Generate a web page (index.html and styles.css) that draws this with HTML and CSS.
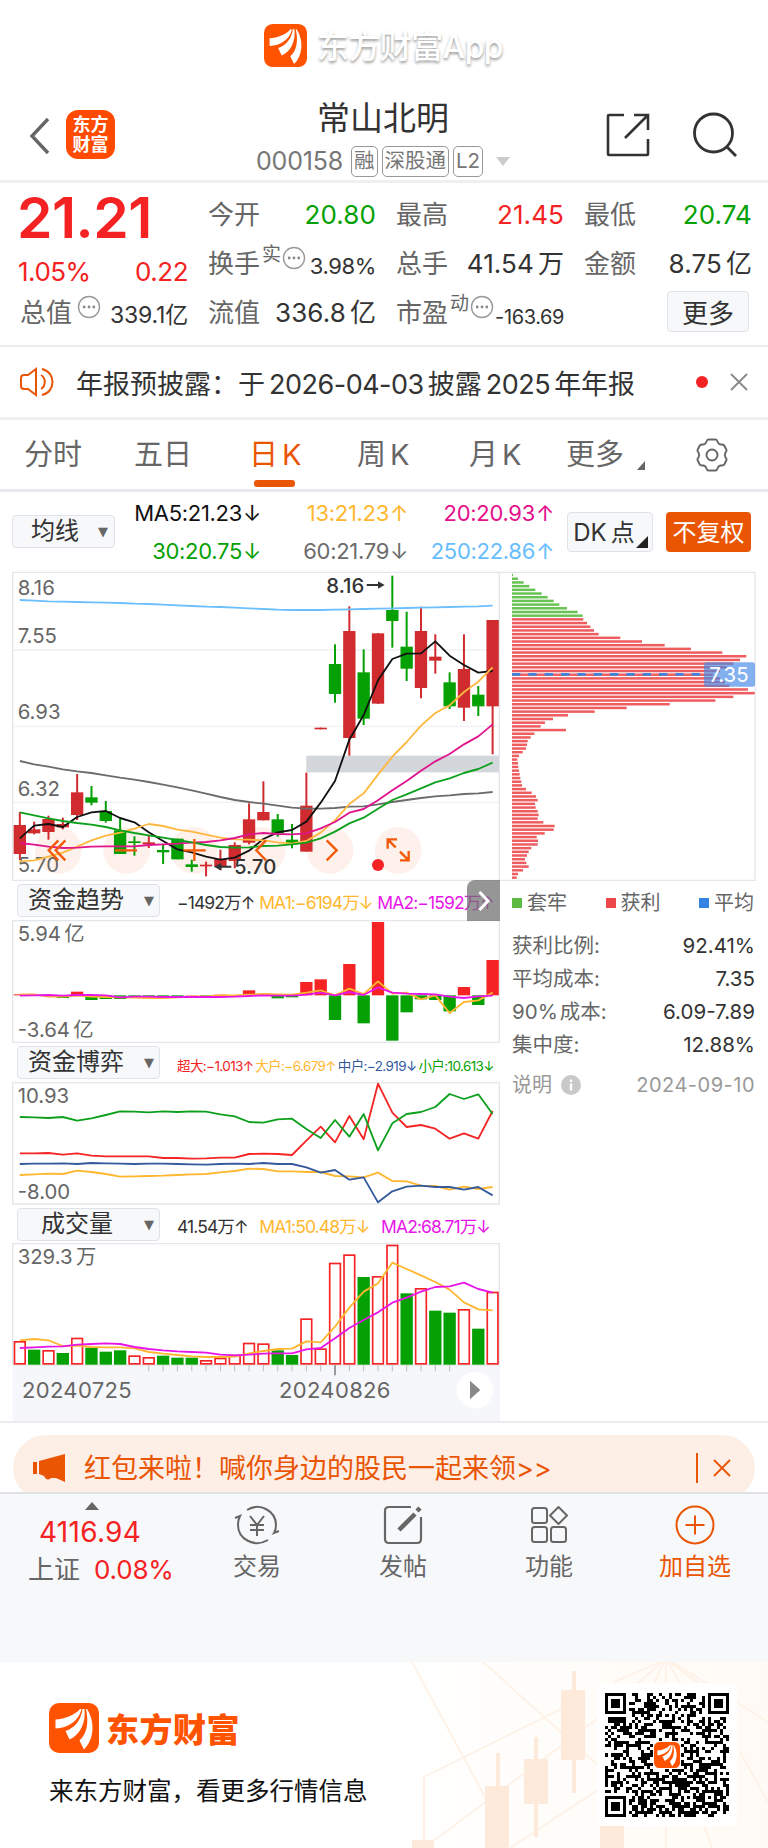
FILE: index.html
```html
<!DOCTYPE html>
<html lang="zh-CN">
<head>
    <meta charset="UTF-8">
    <meta name="viewport" content="width=device-width, initial-scale=1.0">
    <title>常山北明 000158</title>
    <link rel="stylesheet" href="styles.css">
</head>
<body>

<svg width="0" height="0" class="defs">
    <symbol id="logo" viewBox="0 0 100 100">
        <rect width="100" height="100" rx="20" fill="#ff5300"/>
        <path fill="#fff" d="M62 12C52 24 32 32 13 33V51C38 50 60 36 65 12ZM67 12C64 36 50 50 33 56L41 73C62 64 74 40 71 12ZM74 12C80 40 76 62 61 75L70 93C90 74 93 38 76 12Z"/>
    </symbol>
    <symbol id="dots" viewBox="0 0 24 24">
        <circle cx="12" cy="12" r="10.5" fill="none" stroke="#999" stroke-width="1.4"/>
        <circle cx="7.2" cy="12" r="1.4" fill="#888"/><circle cx="12" cy="12" r="1.4" fill="#888"/><circle cx="16.8" cy="12" r="1.4" fill="#888"/>
    </symbol>
</svg>

<div class="brand">
    <svg width="43" height="43"><use href="#logo"/></svg>
    <span>东方财富App</span>
</div>

<header class="header">
    <svg class="back" width="24" height="38" viewBox="0 0 24 38"><path d="M20 2 4 19 20 36" fill="none" stroke="#666" stroke-width="3.4"/></svg>
    <div class="badge">东方<br>财富</div>
    <div class="title">
        <h1>常山北明</h1>
        <div class="code">
            <span class="num">000158</span><i>融</i><i>深股通</i><i>L2</i>
            <svg width="14" height="9" viewBox="0 0 14 9"><path d="M0 0h14L7 9z" fill="#ccc"/></svg>
        </div>
    </div>
    <svg class="share" width="46" height="46" viewBox="0 0 46 46" fill="none" stroke="#333" stroke-width="2.6"><path d="M19 3H4q-1 0-1 1V42q0 1 1 1H42q1 0 1-1V27M29 3H43V18M43 3 20 26"/></svg>
    <svg class="search" width="46" height="46" viewBox="0 0 46 46" fill="none" stroke="#333" stroke-width="2.8"><circle cx="21.500" cy="21" r="19"/><path d="M35 35 44 44"/></svg>
</header>

<section class="quote">
    <div class="col">
        <div class="price">21.21</div>
        <div class="cell red change"><span>1.05%</span><span>0.22</span></div>
        <div class="cell"><label>总值</label><svg class="tip tip-gap" width="24" height="24"><use href="#dots"/></svg><b class="mid">339.1亿</b></div>
    </div>
    <div class="col">
        <div class="cell"><label>今开</label><b class="green">20.80</b></div>
        <div class="cell"><label>换手</label><sup>实</sup><svg class="tip" width="24" height="24"><use href="#dots"/></svg><b class="small">3.98%</b></div>
        <div class="cell"><label>流值</label><b>336.8<s></s>亿</b></div>
    </div>
    <div class="col">
        <div class="cell"><label>最高</label><b class="red">21.45</b></div>
        <div class="cell"><label>总手</label><b>41.54<s></s>万</b></div>
        <div class="cell"><label>市盈</label><sup>动</sup><svg class="tip" width="24" height="24"><use href="#dots"/></svg><b class="tiny">-163.69</b></div>
    </div>
    <div class="col">
        <div class="cell"><label>最低</label><b class="green">20.74</b></div>
        <div class="cell"><label>金额</label><b>8.75<s></s>亿</b></div>
        <div class="cell more"><button>更多</button></div>
    </div>
</section>

<section class="notice">
    <svg width="36" height="30" viewBox="0 0 36 30" fill="none" stroke="#ea5504" stroke-width="2"><path d="M16 2V28L8 22H4q-3 0-3-3V11q0-3 3-3H8ZM21 8c5 3 5 11 0 14M22 2c14 3 14 23 0 26"/></svg>
    <p>年报预披露：于<s></s><span>2026-04-03</span><s></s>披露<s></s><span>2025</span><s></s>年年报</p>
    <span class="dot"></span>
    <svg width="18" height="18" viewBox="0 0 18 18"><path d="M1 1 17 17M17 1 1 17" stroke="#888" stroke-width="1.8"/></svg>
</section>

<nav class="tabs">
    <span>分时</span>
    <span>五日</span>
    <span class="active">日<s></s>K</span>
    <span>周<s></s>K</span>
    <span>月<s></s>K</span>
    <span>更多<svg class="corner" width="8" height="9" viewBox="0 0 8 9"><path d="M8 0V9H0z" fill="#666"/></svg></span>
    <svg width="34" height="34" viewBox="0 0 34 34" fill="none" stroke="#666" stroke-width="1.9" stroke-linejoin="round"><path d="M13.500 1.500h7q1.500 0 2 2 1 3 3.500 3 3-.5 4 2.500l1.500 3q.5 1-1 2.500-1.500 2.500 0 5 1.500 1.500 1 2.500l-1.500 3q-1 3-4 2.500-2.500 0-3.500 3-.5 2-2 2h-7q-1.500 0-2-2-1-3-3.500-3-3 .5-4-2.500l-1.500-3q-.5-1 1-2.500 1.500-2.500 0-5-1.500-1.500-1-2.500l1.500-3q1-3 4-2.500 2.500 0 3.500-3 .5-2 2-2z"/><circle cx="17" cy="17" r="5.500"/></svg>
</nav>

<section class="toolbar">
    <button class="select">均线<em>▼</em></button>
    <div class="ma">
        <span class="c-black">MA5:21.23<u>↓</u></span><span class="c-yellow">13:21.23<u>↑</u></span><span class="c-pink">20:20.93<u>↑</u></span>
        <span class="c-green">30:20.75<u>↓</u></span><span class="c-gray">60:21.79<u>↓</u></span><span class="c-blue">250:22.86<u>↑</u></span>
    </div>
    <button class="dk">DK<s></s>点<svg width="12" height="12" viewBox="0 0 12 12"><path d="M12 0V12H0z" fill="#222"/></svg></button>
    <button class="adjust">不复权</button>
</section>

<section class="charts">
    <div class="left">
        <svg id="kline" width="488" height="310" viewBox="36 18 1464 930"></svg>

        <div class="panel-head">
            <button>资金趋势<em>▼</em></button>
            <div class="legend trend"><span class="c-dark">−1492万↑</span><span class="c-yellow">MA1:−6194万↓</span><span class="c-purple">MA2:−1592万↑</span></div>
            <div class="expand"><svg width="12" height="22" viewBox="0 0 12 22"><path d="M1.500 2 10 11 1.500 20" fill="none" stroke="#fff" stroke-width="3"/></svg></div>
        </div>
        <svg id="trend" width="488" height="123" viewBox="36 120 1464 369"></svg>

        <div class="panel-head">
            <button>资金博弈<em>▼</em></button>
            <div class="legend game"><span class="c-red">超大:−1.013↑</span><span class="c-yellow">大户:−6.679↑</span><span class="c-navy">中户:−2.919↓</span><span class="c-green">小户:10.613↓</span></div>
        </div>
        <svg id="game" width="488" height="123" viewBox="36 126 1464 369"></svg>

        <div class="panel-head last">
            <button>成交量<em>▼</em></button>
            <div class="legend vol"><span class="c-dark">41.54万↑</span><span class="c-yellow">MA1:50.48万↓</span><span class="c-purple">MA2:68.71万↓</span></div>
        </div>
        <svg id="volume" width="488" height="178" viewBox="36 99 1464 534"></svg>
    </div>

    <div class="right">
        <svg id="chips" width="256" height="310" viewBox="1500 18 768 930"></svg>
        <div class="keys">
            <span><i class="k-green"></i>套牢</span><span><i class="k-red"></i>获利</span><span><i class="k-blue"></i>平均</span>
        </div>
        <dl>
            <div><dt>获利比例:</dt><dd>92.41%</dd></div>
            <div><dt>平均成本:</dt><dd>7.35</dd></div>
            <div><dt>90%<s></s>成本:</dt><dd>6.09-7.89</dd></div>
            <div><dt>集中度:</dt><dd>12.88%</dd></div>
        </dl>
        <div class="note"><span>说明</span><svg width="20" height="20" viewBox="0 0 20 20"><circle cx="10" cy="10" r="10" fill="#c8c8c8"/><path d="M10 8.500V15.500M10 4.500V7" stroke="#fff" stroke-width="2.400"/></svg><span class="date">2024-09-10</span></div>
    </div>
</section>

<section class="promo">
    <div class="pill">
        <svg width="32" height="28" viewBox="0 0 32 28" fill="#ea5504"><path d="M0 8H4V20H0zM6 7 32 0V28L23 24H18Q14 28 11 22L6 20z"/></svg>
        <span>红包来啦！喊你身边的股民一起来领&gt;&gt;</span>
        <svg class="close" width="18" height="18" viewBox="0 0 18 18"><path d="M1 1 17 17M17 1 1 17" stroke="#ea5504" stroke-width="1.800"/></svg>
    </div>
</section>

<footer class="bar">
    <div class="index">
        <svg width="14" height="8" viewBox="0 0 14 8"><path d="M7 0 14 8H0z" fill="#666"/></svg>
        <strong>4116.94</strong>
        <p>上证<span>0.08%</span></p>
    </div>
    <div class="item">
        <svg width="46" height="40" viewBox="0 0 46 40" fill="none" stroke="#666" stroke-width="2"><path d="M13 5C26-3 42 6 42 20q0 5-2 8l5-2M34 35C20 43 4 34 4 20q0-5 2-9L1 13M16 11 23 20 30 11M23 20V31M16 20H30M16 25H30"/></svg>
        <span>交易</span>
    </div>
    <div class="item">
        <svg width="40" height="40" viewBox="0 0 40 40" fill="none" stroke="#666" stroke-width="2.200"><path d="M28 2H6Q2 2 2 6V34Q2 38 6 38H34Q38 38 38 34V12"/><path d="M16 25 32 9M34 6 37 3" stroke-width="4.500"/></svg>
        <span>发帖</span>
    </div>
    <div class="item">
        <svg width="38" height="38" viewBox="0 0 38 38" fill="none" stroke="#666" stroke-width="2"><rect x="2" y="2" width="15" height="15" rx="2.500"/><rect x="2" y="21" width="15" height="15" rx="2.500"/><rect x="21" y="21" width="15" height="15" rx="2.500"/><path d="M28.500 1 37 9.500 28.500 18 20 9.500z" stroke-linejoin="round"/></svg>
        <span>功能</span>
    </div>
    <div class="item add">
        <svg width="40" height="40" viewBox="0 0 40 40" fill="none" stroke="#ea5504" stroke-width="2"><circle cx="20" cy="20" r="18.500"/><path d="M20 10.500V29.500M10.500 20H29.500"/></svg>
        <span>加自选</span>
    </div>
</footer>

<section class="download">
    <svg class="deco" width="368" height="186" viewBox="400 0 368 186">
        <defs><linearGradient id="fade"><stop offset="0" stop-color="#fff"/><stop offset="0.400" stop-color="#fffdfa"/><stop offset="1" stop-color="#fffaf5"/></linearGradient></defs>
        <rect x="400" width="368" height="186" fill="url(#fade)"/>
        <g stroke="#fef1e6" stroke-width="1.800" fill="none">
            <path d="M412 0 485 135 500 186M483 0 600 105M424 115 565 45M424 186 600 55M510 186 610 120M660 0 614 20M662 0 630 28M664 0 650 30M666 0V30M668 0 685 30M670 0 705 26M672 0 768 60M740 90 768 140M666 164V186M704 164 712 186M424 115V186"/>
        </g>
        <g fill="#feeadb">
            <path d="M561 28h24v70h-24zM572 9h4v122h-4zM524 97h24v45h-24zM534 75h4v100h-4zM485 124h24v62h-24zM496 91h4v34h-4zM600 164h24v22h-24zM412 178h22v8h-22z"/>
        </g>
    </svg>
    <div class="about">
        <div class="name"><svg width="50" height="50"><use href="#logo"/></svg><strong>东方财富</strong></div>
        <p>来东方财富，看更多行情信息</p>
    </div>
    <div class="qr">
        <svg id="qr" width="124" height="124" viewBox="0 0 41 41" shape-rendering="crispEdges"></svg>
        <svg class="qr-logo" width="26" height="26"><use href="#logo"/></svg>
    </div>
</section>

<script>
    const RED = '#d02b2e', GREEN = '#04a004';
    const YELLOW = '#ffb72f', PURPLE = '#e815e8';

    // three chart units are one pixel, bars are 43 units apart
    const cx = i => 59.5 + i * 42.98;
    const rect = (x, y, w, h, fill, extra = '') => `<rect x="${x}" y="${y}" width="${w}" height="${h}" fill="${fill}" ${extra}/>`;
    const line = (x1, y1, x2, y2, stroke, w) => `<path d="M${x1} ${y1}L${x2} ${y2}" stroke="${stroke}" stroke-width="${w}"/>`;
    const curve = (ys, stroke) => `<polyline points="${ys.map((y, i) => cx(i) + ',' + y).join(' ')}" fill="none" stroke="${stroke}" stroke-width="5.5" stroke-linejoin="round"/>`;
    const label = (x, y, text, cls = '') => `<text x="${x}" y="${y}" class="axis ${cls}">${text}</text>`;
    const frame = (top, bottom) => `<path d="M38 ${top}H1498V${bottom}H38Z" fill="none" stroke="#e4e6ec" stroke-width="4"/>`;
    const draw = (id, parts) => { document.getElementById(id).innerHTML = parts.join(''); };

    // body top, body bottom, high, low, up
    const candles = [
        [780,867,741,885,1],[793,805,770,808,1],[762,801,752,824,1],[777,787,758,793,1],[682,750,627,765,1],
        [697,713,663,721,0],[738,768,708,773,0],[796,867,760,867,0],[829,834,814,872,0],[832,838,813,849,1],
        [855,862,840,897,0],[821,883,821,883,0],[898,906,884,920,0],[899,904,890,934,1],[882,905,854,915,1],
        [840,888,832,910,1],[763,833,715,838,1],[741,766,649,766,1],[763,805,747,815,0],[824,838,777,850,0],
        [722,860,623,860,1],[488,493,488,493,1],[297,387,238,413,0],[198,519,124,572,1],[322,461,253,480,0],
        [205,416,205,416,1],[135,168,32,248,0],[245,311,140,348,0],[198,369,125,400,1],[275,287,208,326,1],
        [352,424,322,432,0],[312,428,208,468,1],[389,424,363,453,0],[165,424,165,568,1]
    ];
    const ma5 = [820,782,777,786,756,742,738,759,772,802,828,853,862,875,884,878,857,822,802,795,770,713,648,524,450,346,282,266,265,229,272,300,323,318];
    const ma13 = [889,886,875,863,845,826,812,803,791,777,783,794,800,809,818,823,824,826,832,836,828,803,766,717,685,629,575,531,482,444,421,381,350,307];
    const ma20 = [834,839,845,849,848,845,844,844,844,840,838,836,833,831,826,819,808,804,807,808,805,790,771,743,732,706,676,648,617,589,567,538,514,478];
    const ma30 = [742,751,760,768,774,779,786,796,804,811,818,825,832,840,846,848,847,843,842,838,833,820,800,775,758,731,705,688,670,652,640,624,612,593];
    const ma60 = [588,598,605,613,619,624,631,638,644,651,659,667,676,686,696,705,711,716,722,728,731,731,729,725,724,718,711,705,699,694,691,687,685,681];
    const ma250 = [105,107,109,110,111,112,113,114,116,117,119,121,123,125,126,128,130,132,134,135,135,135,134,133,132,131,130,129,128,127,126,125,124,122];

    draw('kline', [
        frame(22, 946),
        ...[255, 484, 712].map(y => line(38, y, 1498, y, '#eef0f4', 4)),
        ...[175, 380, 582, 787, 990, 1195].map(x => `<circle cx="${x}" cy="856" r="70" fill="#fef0ea"/>`),
        rect(919, 572, 578, 50, '#d3d6db'),
        ...candles.map((c, i) => {
            const color = c[4] ? RED : GREEN;
            return line(cx(i), c[2], cx(i), c[3], color, 6) + rect(cx(i) - 18.5, c[0], 37, c[1] - c[0], color);
        }),
        label(53, 90, '8.16'), label(53, 235, '7.55'), label(53, 463, '6.93'), label(53, 693, '6.32'), label(53, 922, '5.70'),
        curve(ma250, '#6bbfff'), curve(ma60, '#6b6b6b'), curve(ma5, '#111'), curve(ma13, '#ffb940'), curve(ma20, '#e0148c'), curve(ma30, '#0da01c'),
        label(979, 83, '8.16', 'mark'), label(702, 927, '5.70', 'mark'),
        '<path d="M1100 60H1140M694 905H660" stroke="#333" stroke-width="6"/><path d="M1154 60 1134 49V71zM642 905 664 893V917z" fill="#333"/>',
        '<g fill="none" stroke="#f25a0a" stroke-width="7"><path d="M175 826 146 856 175 886M196 826 167 856 196 886M345 856H411M550 856H617M583 822V888M798 826 769 856 798 886M980 826 1010 856 980 886M1191 823H1163V851M1163 823 1187 847M1200 886H1226V858M1226 886 1200 860"/></g>',
        '<circle cx="1134" cy="900" r="18" fill="#f42222"/>'
    ]);

    const flow = [343,346,346,354,335,360,357,357,348,348,348,348,345,348,344,348,331,346,355,352,306,298,420,252,430,126,482,397,358,360,394,321,375,240];
    const flowMa1 = [343,343,350,350,347,350,351,352,353,354,354,352,349,349,346,346,344,342,343,344,338,331,346,326,342,304,341,338,358,346,399,366,361,338];
    const flowMa2 = [347,346,345,347,345,345,346,352,350,350,351,351,351,351,351,350,348,346,347,347,344,338,346,336,345,322,338,341,342,343,350,354,349,347];
    draw('trend', [
        frame(122, 487),
        ...flow.map((y, i) => rect(cx(i) - 18.5, Math.min(y, 346), 37, Math.abs(y - 346), y < 346 ? '#f52323' : GREEN)),
        label(53, 183, '5.94<tspan dx="10">亿</tspan>'), label(53, 472, '-3.64<tspan dx="10">亿</tspan>'),
        curve(flowMa1, YELLOW), curve(flowMa2, PURPLE)
    ]);

    draw('game', [
        frame(128, 492),
        label(53, 188, '10.93'), label(53, 477, '-8.00'),
        curve([405,403,401,402,392,396,402,410,409,408,407,405,403,402,397,393,386,387,394,394,396,396,408,409,412,398,423,424,437,438,449,440,447,441], YELLOW),
        curve([372,371,371,370,372,369,370,371,372,371,371,372,373,374,372,371,372,369,372,372,382,398,390,419,412,487,454,440,437,441,441,449,441,466], '#34599c'),
        curve([340,340,339,344,340,347,349,349,349,349,354,354,356,355,353,353,342,341,342,345,302,260,307,228,298,131,218,261,255,266,296,280,296,213], '#f52525'),
        curve([231,232,234,231,242,235,225,214,215,217,214,216,214,215,223,229,246,248,238,236,267,294,240,290,222,331,250,222,216,201,162,177,163,222], '#0da01c')
    ]);

    const volumes = [393,419,420,429,383,413,425,421,436,441,437,443,443,450,443,434,398,400,421,435,325,415,158,133,201,198,104,250,234,302,308,297,356,245];
    const falling = [1,3,5,6,7,10,11,12,18,19,24,27,29,30,32];
    const ticks = [];
    for (let i = 9; i <= 30; i++) ticks.push(line(cx(i), 466, cx(i), i === 22 ? 496 : 484, i === 22 ? '#888' : '#bbb', i === 22 ? 5 : 3));
    draw('volume', [
        rect(38, 466, 1462, 167, '#f6f7fa'),
        frame(101, 465),
        label(53, 163, '329.3<tspan dx="10">万</tspan>'),
        ...volumes.map((y, i) => falling.includes(i)
            ? rect(cx(i) - 18.5, y, 37, 464 - y, GREEN)
            : rect(cx(i) - 16, y + 2.5, 32, 459 - y, '#fff', 'stroke="#f52323" stroke-width="5"')),
        curve([391,387,391,408,407,411,412,412,415,426,431,435,439,441,441,440,430,423,417,416,394,397,350,293,245,220,158,177,196,216,239,277,298,301], YELLOW),
        curve([414,412,410,409,404,402,400,402,411,417,421,424,426,428,434,436,434,431,430,430,418,414,385,354,330,307,278,263,245,231,229,218,237,248], PURPLE),
        ...ticks,
        label(66, 563, '20240725', 'day'), label(837, 563, '20240826', 'day'),
        '<circle cx="1425" cy="540" r="55" fill="#fff"/><path d="M1410 512 1441 540 1410 568z" fill="#888"/>'
    ]);

    const chips = [39,54,71,88,106,125,143,161,178,201,233,248,250,261,271,282,296,361,426,494,573,667,739,720,700,680,660,640,660,675,688,744,764,700,646,509,380,284,204,159,135,122,198,103,92,83,81,78,68,57,52,54,55,57,59,61,64,66,78,95,108,113,105,107,113,116,113,130,164,161,134,110,114,113,94,86,81,75,79,86,69,54,50];
    draw('chips', [
        '<path d="M1500 22H2265V946H1500" fill="none" stroke="#e4e6ec" stroke-width="4"/>',
        ...chips.map((x, i) => rect(1536, 26.5 + i * 11.07, x - 36, 7.5, i < 12 ? '#69c354' : '#ef5c5f')),
        '<path d="M1536 328H2110" stroke="#3f83dd" stroke-width="8" stroke-dasharray="25 24"/>',
        rect(2112, 292, 153, 73, '#4388e6', 'rx="8" fill-opacity="0.66"'),
        label(2128, 350, '7.35', 'tag')
    ]);

    // 41 x 41 code with three finder squares and a clear centre
    const finder = (x, y) => {
        const dx = Math.abs(x - 3), dy = Math.abs(y - 3), d = Math.max(dx, dy);
        return d === 3 || d < 2;
    };
    let seed = 158, cells = '';
    for (let y = 0; y < 41; y++) {
        for (let x = 0; x < 41; x++) {
            seed = (seed * 1103515245 + 12345) % 2147483648;
            let on = (seed >> 12) % 100 < 50;
            if (x < 8 && y < 8) on = x < 7 && y < 7 && finder(x, y);
            else if (x > 32 && y < 8) on = x > 33 && y < 7 && finder(x - 34, y);
            else if (x < 8 && y > 32) on = x < 7 && y > 33 && finder(x, y - 34);
            else if (Math.max(Math.abs(x - 34), Math.abs(y - 34)) < 3) on = Math.max(Math.abs(x - 34), Math.abs(y - 34)) !== 1;
            if (Math.abs(x - 20) < 5 && Math.abs(y - 20) < 5) on = false;
            if (on) cells += `M${x} ${y}h1v1h-1z`;
        }
    }
    draw('qr', [`<path d="${cells}"/>`]);
</script>

</body>
</html>
```
FILE: styles.css
```css
* {
    box-sizing: border-box;
}
body {
    width: 768px;
    margin: 0;
    background: #fff;
    color: #333;
    font-family: Inter, "Noto Sans CJK SC", sans-serif;
    font-size: 26px;
}
h1, p, dl, dd {
    margin: 0;
}
svg {
    display: block;
    flex: none;
}
i, em {
    font-style: normal;
}
u, s {
    text-decoration: none;
}
s {
    display: inline-block;
    width: 4px;
}
button {
    padding: 0;
    border: 1.5px solid #dfe2e8;
    border-radius: 4px;
    background: #f7f8fa;
    color: #333;
    font-family: inherit;
    white-space: nowrap;
}
.defs {
    position: absolute;
}
.red {
    color: #f42222;
}
.green {
    color: #04a004;
}
.c-black { color: #111; }
.c-dark { color: #333; }
.c-yellow { color: #ffb72f; }
.c-pink { color: #e5108c; }
.c-green { color: #04a004; }
.c-gray { color: #6b6b6b; }
.c-blue { color: #68bdff; }
.c-purple { color: #e815e8; }
.c-red { color: #f42222; }
.c-navy { color: #34599c; }

/* top */
.brand {
    display: flex;
    align-items: center;
    height: 90px;
    padding-left: 264px;
}
.brand span {
    margin: 4px 0 0 10px;
    color: #fff;
    font-size: 32px;
    font-weight: 500;
    line-height: 40px;
    letter-spacing: -0.6px;
    text-shadow: 0 2px 3px rgba(0, 0, 0, 0.4);
}
.header {
    display: flex;
    height: 93px;
    border-bottom: 3px solid #f0f0f0;
}
.back {
    margin: 27px 0 0 28px;
}
.badge {
    width: 49px;
    height: 49px;
    margin: 20px 0 0 14px;
    padding-top: 5px;
    border-radius: 12px;
    background: #ff4a00;
    color: #fff;
    font-size: 18px;
    font-weight: 700;
    line-height: 20px;
    text-align: center;
}
.title {
    width: 254px;
    margin-left: 141px;
}
h1 {
    height: 55px;
    padding-left: 61px;
    font-size: 33px;
    font-weight: 400;
    line-height: 57px;
}
.code {
    display: flex;
    align-items: center;
    height: 32px;
    color: #777;
    font-size: 25px;
}
.code .num {
    flex: none;
    width: 93px;
    letter-spacing: -0.2px;
}
.code i {
    flex: none;
    height: 31px;
    margin: 0 2px;
    padding: 0 2px;
    border: 1.5px solid #999;
    border-radius: 5px;
    font-size: 20.5px;
    line-height: 28px;
    white-space: nowrap;
}
.code svg {
    margin-left: 11px;
}
.share {
    margin: 22px 0 0 95px;
}
.search {
    margin: 22px 0 0 41px;
}

/* quote */
.quote {
    display: grid;
    grid-template-columns: repeat(4, 168px);
    gap: 20px;
    height: 164px;
    padding: 7px 0 0 20px;
    border-bottom: 2px solid #ececee;
}
.price {
    height: 56px;
    margin-left: -3px;
    color: #f42222;
    font-size: 57px;
    font-weight: 600;
    line-height: 56px;
    letter-spacing: -0.5px;
}
.cell {
    display: flex;
    align-items: center;
    height: 49px;
    line-height: 49px;
    letter-spacing: 0.1px;
}
.cell label {
    color: #666;
    letter-spacing: 0;
}
.cell b {
    margin-left: auto;
    font-weight: 400;
}
.change {
    justify-content: space-between;
    height: 50px;
    margin-left: -2px;
    letter-spacing: -0.5px;
}
.price + .change + .cell {
    margin-top: -8px;
}
.cell sup {
    margin: -18px 0 0 2px;
    color: #666;
    font-size: 19px;
    line-height: 20px;
    vertical-align: top;
}
.tip {
    margin: -12px 0 0 1px;
}
.tip-gap {
    margin-left: 5px;
}
.cell .small, .cell .mid, .cell .tiny {
    padding-top: 6px;
    font-size: 22px;
    letter-spacing: -0.4px;
}
.cell .mid {
    font-size: 23px;
    letter-spacing: -0.2px;
}
.cell .tiny {
    padding-top: 9px;
    font-size: 20px;
}
.more {
    justify-content: flex-end;
    padding-right: 3px;
}
.more button {
    width: 82px;
    height: 41px;
    margin-top: -3px;
    font-size: 26px;
}

/* notice */
.notice {
    display: flex;
    align-items: center;
    height: 73px;
    padding-left: 20px;
    border-bottom: 3px solid #f0f0f0;
    font-size: 27px;
}
.notice p {
    flex: none;
    width: 619px;
    padding-left: 20px;
    white-space: nowrap;
}
.notice p span {
    letter-spacing: -0.5px;
}
.dot {
    width: 12px;
    height: 12px;
    margin: 0 22px 0 21px;
    border-radius: 50%;
    background: #f42222;
}

/* tabs */
.tabs {
    display: grid;
    grid-template-columns: 110px 115px 108px 112px 97px 129px 40px;
    align-items: center;
    height: 72px;
    padding: 1px 0 0 24px;
    border-bottom: 3px solid #e8e9ee;
    color: #666;
    font-size: 29px;
    line-height: 68px;
}
.tabs .active {
    position: relative;
    color: #ea5504;
}
.tabs .active::after {
    content: "";
    position: absolute;
    left: 5px;
    bottom: 2px;
    width: 41px;
    height: 7px;
    border-radius: 3px;
    background: #ea5504;
}
.corner {
    display: inline-block;
    margin-left: 13px;
    vertical-align: -5px;
}

/* toolbar */
.toolbar {
    display: flex;
    align-items: center;
    height: 79px;
    padding-left: 12px;
}
button em {
    color: #666;
    font-family: "DejaVu Sans", sans-serif;
    font-size: 13px;
    vertical-align: 3px;
}
.select {
    width: 103px;
    height: 33px;
    padding-left: 12px;
    font-size: 24px;
    line-height: 28px;
}
.select em {
    margin-left: 19px;
}
.ma {
    display: grid;
    grid-template-columns: 146px 147px 146px;
    grid-template-rows: 38px 38px;
    height: 76px;
    font-size: 22px;
    line-height: 38px;
    letter-spacing: -0.3px;
    text-align: right;
}
.ma u {
    display: inline-block;
    width: 19px;
}
.dk {
    position: relative;
    width: 86px;
    height: 40px;
    margin-left: 13px;
    padding: 0 12px 2px 0;
    font-size: 24px;
}
.dk svg {
    position: absolute;
    right: 4px;
    bottom: 3px;
}
.adjust {
    width: 85px;
    height: 40px;
    margin-left: 13px;
    padding-bottom: 2px;
    border: 0;
    background: #ea5504;
    color: #fff;
    font-size: 24px;
}

/* charts */
.charts {
    display: grid;
    grid-template-columns: 488px 256px;
    height: 852px;
    padding-left: 12px;
    border-bottom: 2px solid #ececf0;
}
.axis {
    fill: #666;
    font-size: 61px;
}
.axis.mark {
    fill: #333;
    font-weight: 500;
}
.axis.day {
    font-size: 66px;
    letter-spacing: 1px;
}
.axis.tag {
    fill: #fff;
}
.panel-head {
    position: relative;
    display: flex;
    align-items: center;
    height: 39px;
}
.panel-head.last {
    height: 38px;
}
.panel-head button {
    width: 143px;
    height: 33px;
    margin-left: 5px;
    padding-left: 5px;
    font-size: 24px;
    line-height: 28px;
}
.panel-head em {
    margin-left: 20px;
}
.panel-head.last em {
    margin-left: 31px;
}
.panel-head.last button {
    padding-left: 18px;
}
.legend {
    display: flex;
    justify-content: space-between;
    width: 317px;
    margin-left: 17px;
    padding-top: 2px;
    font-size: 17.5px;
    letter-spacing: -0.9px;
    white-space: nowrap;
}
.legend.game {
    padding-top: 4px;
    font-size: 13.5px;
    letter-spacing: -0.6px;
}
.legend.vol {
    width: 313px;
}
.expand {
    position: absolute;
    top: -1px;
    right: 0;
    display: flex;
    align-items: center;
    justify-content: center;
    width: 33px;
    height: 41px;
    border-radius: 8px 0 0 0;
    background: rgba(110, 110, 110, 0.72);
}
.keys {
    display: flex;
    justify-content: space-between;
    width: 242px;
    margin: 7px 0 0 12px;
    color: #666;
    font-size: 20px;
    line-height: 30px;
}
.keys i {
    display: inline-block;
    width: 10px;
    height: 10px;
    margin-right: 5px;
    vertical-align: 2px;
}
.k-green { background: #5dbb43; }
.k-red { background: #ee474a; }
.k-blue { background: #3383e4; }
dl {
    margin: 11px 1px 0 12px;
    font-size: 20.5px;
}
dl div {
    display: flex;
    justify-content: space-between;
    height: 33px;
    line-height: 33px;
}
dt {
    color: #666;
}
dt s {
    width: 2px;
}
.note {
    display: flex;
    align-items: center;
    margin: 9px 1px 0 12px;
    color: #999;
    font-size: 20px;
    line-height: 30px;
}
.note svg {
    margin-left: 9px;
}
.note .date {
    margin-left: auto;
    letter-spacing: 0.5px;
}

/* bottom */
.promo {
    height: 69px;
    padding: 12px 13px 0;
    overflow: hidden;
}
.pill {
    display: flex;
    align-items: center;
    height: 66px;
    padding: 0 24px 0 20px;
    border-radius: 33px;
    background: #fdeee6;
    color: #ea5504;
    font-size: 27px;
}
.pill span {
    padding: 0 0 3px 19px;
}
.close {
    margin-left: auto;
}
.pill .close {
    box-sizing: content-box;
    padding: 6px 0 6px 15px;
    border-left: 2px solid #ea5504;
}
.bar {
    display: flex;
    height: 170px;
    border-top: 2px solid #dfe1e6;
    background: #f7f8fa;
    color: #666;
}
.index {
    width: 184px;
    padding-top: 8px;
}
.index svg {
    margin-left: 85px;
}
.index strong {
    display: block;
    margin-left: 39px;
    color: #f42222;
    font-size: 28px;
    font-weight: 400;
    line-height: 44px;
    letter-spacing: 0.3px;
}
.index p {
    margin-left: 28px;
    line-height: 32px;
}
.index span {
    margin-left: 14px;
    color: #f42222;
    letter-spacing: -0.2px;
}
.item {
    display: flex;
    flex-direction: column;
    align-items: center;
    width: 146px;
    padding-top: 11px;
    font-size: 24px;
}
.item svg {
    height: 40px;
}
.item span {
    margin-top: 5px;
    line-height: 34px;
}
.add {
    color: #ea5504;
}
.download {
    position: relative;
    display: flex;
    justify-content: space-between;
    height: 186px;
    overflow: hidden;
}
.deco {
    position: absolute;
    right: 0;
    top: 0;
}
.about {
    padding: 41px 0 0 49px;
    color: #111;
    font-size: 24.5px;
}
.name {
    display: flex;
    align-items: center;
    height: 50px;
    margin-bottom: 21px;
}
.name strong {
    margin-left: 7px;
    color: #ff5300;
    font-size: 33px;
    font-weight: 900;
    letter-spacing: 0.5px;
}
.about p {
    line-height: 34px;
}
.qr {
    position: relative;
    display: flex;
    align-items: center;
    justify-content: center;
    width: 140px;
    height: 143px;
    margin: 21px 31px 0 0;
    border-radius: 6px;
    background: #fff;
}
.qr-logo {
    position: absolute;
    top: 59px;
    left: 57px;
}
```
